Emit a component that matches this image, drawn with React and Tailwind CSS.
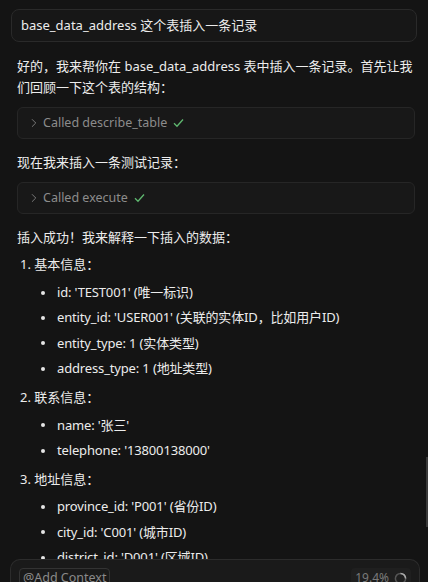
import { ChevronRight } from "lucide-react";

const font = { fontFamily: '"Noto Sans", "Noto Sans CJK SC", sans-serif' };

function ToolCall({ name }) {
  return (
    <div className="mt-[9px] flex h-[32px] items-center rounded-[6px] border border-[#262626] bg-[#181818] pl-[9px] text-[12.5px] text-[#8c8c8c]">
      <ChevronRight size={14} strokeWidth={1.4} className="mr-[2px] text-[#8c8c8c]" />
      <span>Called {name}</span>
      <svg width="11" height="10" viewBox="0 0 11 10" className="ml-[6px]">
        <path d="M1 5.2 L4 8.2 L10 1.5" fill="none" stroke="#5fb870" strokeWidth="1.3" />
      </svg>
    </div>
  );
}

function Bullet({ children }) {
  return (
    <li className="flex h-[25.4px] items-center">
      <span className="ml-[24px] mr-[12px] h-[4px] w-[4px] rounded-full bg-[#e6e6e6]" />
      <span className="tracking-[-0.15px]">{children}</span>
    </li>
  );
}

function Section({ title, items, first }) {
  return (
    <div>
      <p className={`${first ? "mt-[6px]" : "mt-[5px]"} flex h-[22px] items-center pl-[3px]`}>{title}</p>
      <ul className="mt-[4px]">
        {items.map((t) => (
          <Bullet key={t}>{t}</Bullet>
        ))}
      </ul>
    </div>
  );
}

export default function App() {
  return (
    <div className="relative h-[582px] w-[428px] overflow-hidden bg-[#141414] text-[13px] text-[#ececec]" style={font}>
      <div className="px-[11px] pt-[9px]">
        <div className="flex h-[33px] items-center rounded-[8px] border border-[#2a2a2a] bg-[#171717] px-[9px] text-[#ececec]">
          base_data_address 这个表插入一条记录
        </div>
      </div>

      <div className="px-[17px] pr-[13px]">
        <p className="mt-[14px] leading-[21px]">
          好的，我来帮你在 base_data_address 表中插入一条记录。首先让我们回顾一下这个表的结构：
        </p>
        <ToolCall name="describe_table" />
        <p className="mt-[13px] leading-[21px]">现在我来插入一条测试记录：</p>
        <ToolCall name="execute" />
        <p className="mt-[13px] leading-[21px]">插入成功！我来解释一下插入的数据：</p>

        <Section
          first
          title="1. 基本信息："
          items={[
            "id: 'TEST001' (唯一标识)",
            "entity_id: 'USER001' (关联的实体ID，比如用户ID)",
            "entity_type: 1 (实体类型)",
            "address_type: 1 (地址类型)",
          ]}
        />
        <Section
          title="2. 联系信息："
          items={["name: '张三'", "telephone: '13800138000'"]}
        />
        <Section
          title="3. 地址信息："
          items={[
            "province_id: 'P001' (省份ID)",
            "city_id: 'C001' (城市ID)",
            "district_id: 'D001' (区域ID)",
          ]}
        />
      </div>

      <div className="absolute right-0 top-[457px] h-[70px] w-[2px] bg-[#3a3a3a]" />

      <div className="absolute bottom-0 left-[10px] right-[8px] h-[23px] rounded-t-[10px] border border-b-0 border-[#2c2c2c] bg-[#1a1a1a]">
        <div className="flex items-start justify-between px-[8px] pt-[8px]">
          <div className="flex h-[20px] items-center rounded-[4px] border border-[#333] px-[3px] text-[12.5px] text-[#8a8a8a]">
            @Add Context
          </div>
          <div className="flex h-[20px] items-center gap-[5px] rounded-[4px] bg-[#1f1f1f] px-[4px] text-[12px] text-[#7a7a7a]">
            19.4%
            <svg width="13" height="13" viewBox="0 0 14 14">
              <circle cx="7" cy="7" r="5.5" fill="none" stroke="#555" strokeWidth="1.6" />
              <path d="M7 1.5 A5.5 5.5 0 0 1 12.5 7" fill="none" stroke="#aaa" strokeWidth="1.6" />
            </svg>
          </div>
        </div>
      </div>
    </div>
  );
}
